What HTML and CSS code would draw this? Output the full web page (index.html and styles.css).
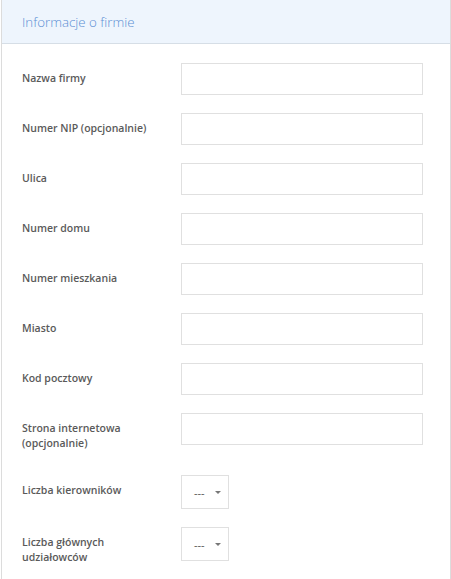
FILE: index.html
```html
<!DOCTYPE html>
<html lang="pl">
<head>
    <meta charset="UTF-8">
    <meta name="viewport" content="width=device-width, initial-scale=1.0">
    <title>Informacje o firmie</title>
    <link rel="stylesheet" href="styles.css">
</head>
<body>
    <div class="panel">
        <div class="panel-heading">
            <h3 class="panel-title">Informacje o firmie</h3>
        </div>

        <form class="panel-body">
            <div class="form-group">
                <label class="control-label">Nazwa firmy</label>
                <input class="form-control" type="text">
            </div>
            <div class="form-group">
                <label class="control-label">Numer NIP (opcjonalnie)</label>
                <input class="form-control" type="text">
            </div>
            <div class="form-group">
                <label class="control-label">Ulica</label>
                <input class="form-control" type="text">
            </div>
            <div class="form-group">
                <label class="control-label">Numer domu</label>
                <input class="form-control" type="text">
            </div>
            <div class="form-group">
                <label class="control-label">Numer mieszkania</label>
                <input class="form-control" type="text">
            </div>
            <div class="form-group">
                <label class="control-label">Miasto</label>
                <input class="form-control" type="text">
            </div>
            <div class="form-group">
                <label class="control-label">Kod pocztowy</label>
                <input class="form-control" type="text">
            </div>
            <div class="form-group">
                <label class="control-label">Strona internetowa (opcjonalnie)</label>
                <input class="form-control" type="text">
            </div>
            <div class="form-group">
                <label class="control-label">Liczba kierowników</label>
                <div class="select-box">
                    <span>---</span>
                    <span class="caret"></span>
                </div>
            </div>
            <div class="form-group">
                <label class="control-label">Liczba głównych udziałowców</label>
                <div class="select-box">
                    <span>---</span>
                    <span class="caret"></span>
                </div>
            </div>
        </form>
    </div>
</body>
</html>
```

FILE: styles.css
```css
* {
    margin: 0;
    padding: 0;
    box-sizing: border-box;
}

body {
    font-family: "Open Sans", "Liberation Sans", sans-serif;
    background: #fff;
    color: #555;
}

.panel {
    margin-left: 1px;
    width: 450px;
    min-height: 579px;
    border-left: 1px solid #dcdcdc;
    border-right: 1px solid #dcdcdc;
}

.panel-heading {
    height: 44px;
    padding: 0 20px;
    display: flex;
    align-items: center;
    background: #eef5fd;
    border-bottom: 1px solid #d6dee6;
}

.panel-title {
    font-size: 13.3px;
    font-weight: 300;
    color: #5b8fd4;
}

.panel-body {
    padding: 19px 27px 0 20px;
}

.form-group {
    display: flex;
    align-items: flex-start;
    margin-bottom: 18px;
}

.control-label {
    width: 159px;
    padding: 8px 10px 6px 0;
    font-size: 10.5px;
    font-weight: 600;
    line-height: 15px;
    color: #5a5a5a;
}

.form-control {
    width: 242px;
    height: 32px;
    border: 1px solid #e0e0e0;
    border-radius: 0;
    outline: none;
}

.select-box {
    width: 48px;
    height: 34px;
    border: 1px solid #e0e0e0;
    display: flex;
    align-items: center;
    justify-content: space-between;
    padding: 0 7px 0 12px;
    font-size: 11px;
    color: #555;
}

.caret {
    width: 0;
    height: 0;
    border-left: 3px solid transparent;
    border-right: 3px solid transparent;
    border-top: 3px solid #777;
}
```
